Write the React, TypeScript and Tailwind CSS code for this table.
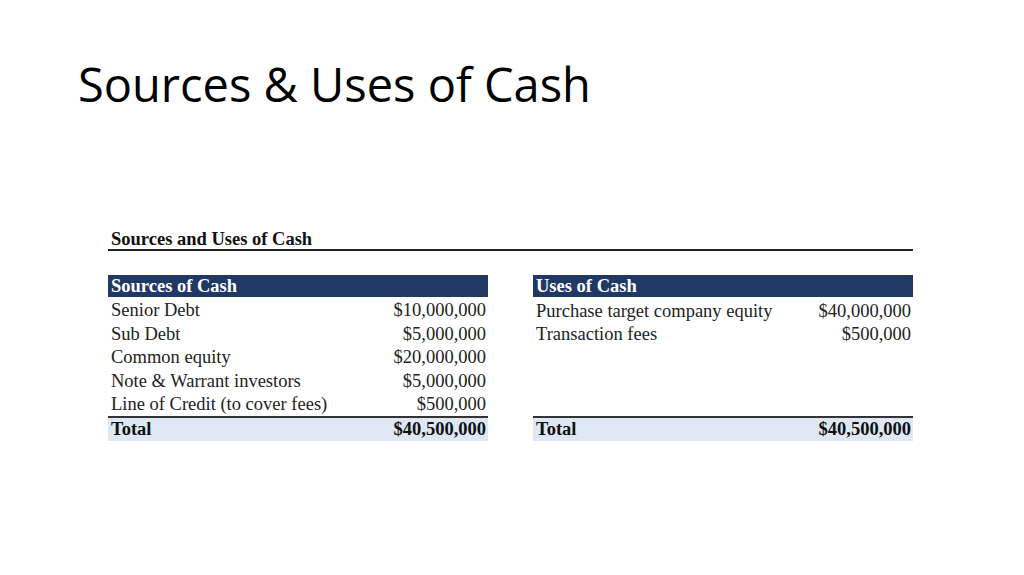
const serif = { fontFamily: '"Liberation Serif", "Times New Roman", serif' }

type Row = { label: string; value: string }

const sources: Row[] = [
  { label: 'Senior Debt', value: '$10,000,000' },
  { label: 'Sub Debt', value: '$5,000,000' },
  { label: 'Common equity', value: '$20,000,000' },
  { label: 'Note & Warrant investors', value: '$5,000,000' },
  { label: 'Line of Credit (to cover fees)', value: '$500,000' },
]

const uses: Row[] = [
  { label: 'Purchase target company equity', value: '$40,000,000' },
  { label: 'Transaction fees', value: '$500,000' },
]

function CashTable({ title, rows, total }: { title: string; rows: Row[]; total: string }) {
  return (
    <div className="flex w-[380px] flex-col">
      <div className="flex h-[22px] items-center bg-[#1f3864] px-[3px] text-[18.5px] font-bold leading-none text-white">
        {title}
      </div>
      <div className="flex h-[119px] flex-col pt-[2px]">
        {rows.map((r) => (
          <div key={r.label} className="flex h-[23.8px] items-center justify-between pl-[3px] pr-[2px] text-[18.5px] leading-none text-[#222]">
            <span>{r.label}</span>
            <span>{r.value}</span>
          </div>
        ))}
      </div>
      <div className="flex h-[25px] items-center justify-between border-t-2 border-[#333] bg-[#dde8f4] pl-[3px] pr-[2px] text-[18.5px] font-bold leading-none text-[#111]">
        <span>Total</span>
        <span>{total}</span>
      </div>
    </div>
  )
}

export default function App() {
  return (
    <div className="h-[575px] w-[1024px] bg-white">
      <h1
        className="pl-[78px] pt-[56px] text-[47px] leading-[56px] text-black"
        style={{ fontFamily: '"Open Sans", "Noto Sans", sans-serif' }}
      >
        Sources &amp; Uses of Cash
      </h1>
      <div className="ml-[108px] mt-[117px] w-[805px]" style={serif}>
        <div className="border-b-2 border-[#222] pl-[3px] text-[18.5px] font-bold leading-[20px] text-[#111]">
          Sources and Uses of Cash
        </div>
        <div className="mt-[24px] flex justify-between">
          <CashTable title="Sources of Cash" rows={sources} total="$40,500,000" />
          <CashTable title="Uses of Cash" rows={uses} total="$40,500,000" />
        </div>
      </div>
    </div>
  )
}
